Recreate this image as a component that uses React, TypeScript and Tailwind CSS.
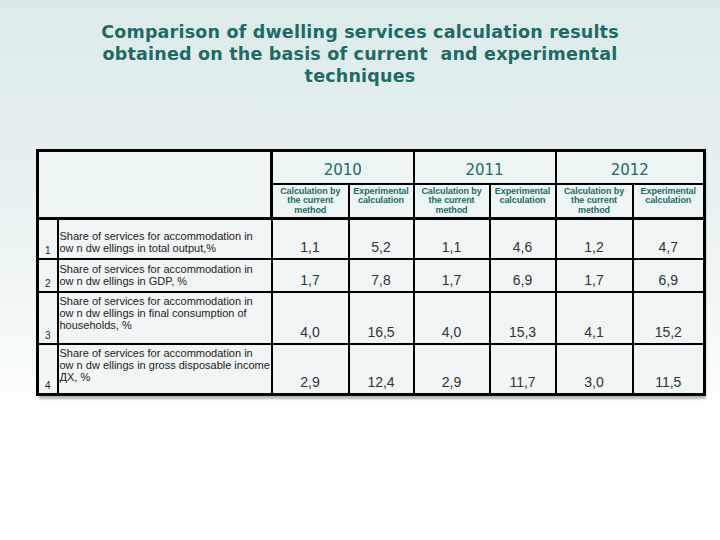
import React from 'react';

interface Row {
    n: number;
    text: string[];
    top: boolean;
    h: string;
    values: string[];
}

const rows: Row[] = [
    { n: 1, text: ['Share of services for accommodation in', 'ow n dw ellings in total output,%'], top: false, h: 'h-[40px]', values: ['1,1', '5,2', '1,1', '4,6', '1,2', '4,7'] },
    { n: 2, text: ['Share of services for accommodation in', 'ow n dw ellings in GDP, %'], top: false, h: 'h-[33px]', values: ['1,7', '7,8', '1,7', '6,9', '1,7', '6,9'] },
    { n: 3, text: ['Share of services for accommodation in', 'ow n dw ellings in final consumption of', 'households, %'], top: true, h: 'h-[52px]', values: ['4,0', '16,5', '4,0', '15,3', '4,1', '15,2'] },
    { n: 4, text: ['Share of services for accommodation in', 'ow n dw ellings in gross disposable income', 'ДХ, %'], top: true, h: 'h-[51px]', values: ['2,9', '12,4', '2,9', '11,7', '3,0', '11,5'] },
];

const years = ['2010', '2011', '2012'];

const App: React.FC = () => {
    return (
        <div className="w-[720px] h-[540px] overflow-hidden bg-[linear-gradient(to_bottom,#ddeaea_0%,#ebf3f3_45%,#ffffff_78%,#ffffff_100%)]">
            <h1 className="pt-[21px] text-center text-[17.5px] leading-[22px] tracking-[0.2px] font-bold text-[#1b6b66] font-['DejaVu_Sans',sans-serif]">
                Comparison of dwelling services calculation results<br />
                obtained on the basis of current&nbsp; and experimental<br />
                techniques
            </h1>

            <div className="ml-[36px] mt-[62px] w-[667px] shadow-[3px_3px_2px_rgba(0,0,0,0.28)]">
                <table className="w-[667px] table-fixed border-collapse border-[3px] border-black bg-[#f0f5f5]">
                    <colgroup>
                        <col className="w-[20px]" />
                        <col className="w-[214px]" />
                        <col className="w-[77px]" />
                        <col className="w-[65px]" />
                        <col className="w-[76px]" />
                        <col className="w-[66px]" />
                        <col className="w-[77px]" />
                        <col className="w-[72px]" />
                    </colgroup>
                    <thead className="bg-[#edf4f4]">
                        <tr className="h-[33px]">
                            <th colSpan={2} rowSpan={2} className="border-[3px] border-black"></th>
                            {years.map(y => (
                                <th key={y} colSpan={2} className="border-2 border-black pt-[6px] align-middle text-[15px] font-normal text-[#1b6b66] font-['DejaVu_Sans',sans-serif]">
                                    {y}
                                </th>
                            ))}
                        </tr>
                        <tr className="h-[35px]">
                            {years.map(y => (
                                <React.Fragment key={y}>
                                    <th className="border-2 border-b-[3px] border-black align-top pt-[2px] text-[9px] leading-[9.5px] font-bold tracking-[-0.1px] text-[#1b6b66] font-['Liberation_Sans',sans-serif]">
                                        Calculation by<br />the current<br />method
                                    </th>
                                    <th className="border-2 border-b-[3px] border-black align-top pt-[2px] text-[9px] leading-[9.5px] font-bold tracking-[-0.1px] text-[#1b6b66] font-['Liberation_Sans',sans-serif]">
                                        Experimental<br />calculation
                                    </th>
                                </React.Fragment>
                            ))}
                        </tr>
                    </thead>
                    <tbody className="font-['Liberation_Sans',sans-serif]">
                        {rows.map(row => (
                            <tr key={row.n} className={row.h}>
                                <td className="border-2 border-black align-bottom text-center pb-[1px] text-[10px] leading-[12px] text-[#222]">{row.n}</td>
                                <td className={`border-2 border-black pl-[1px] pb-[3px] text-[11px] leading-[12.3px] text-[#222] ${row.top ? 'align-top pt-[2px]' : 'align-bottom'}`}>
                                    {row.text.map((t, i) => (
                                        <div key={i} className="whitespace-nowrap">{t}</div>
                                    ))}
                                </td>
                                {row.values.map((v, i) => (
                                    <td key={i} className="border-2 border-black align-bottom text-center pb-[3px] text-[14px] leading-[16px] text-[#333]">
                                        {v}
                                    </td>
                                ))}
                            </tr>
                        ))}
                    </tbody>
                </table>
            </div>
        </div>
    );
};

export default App;
